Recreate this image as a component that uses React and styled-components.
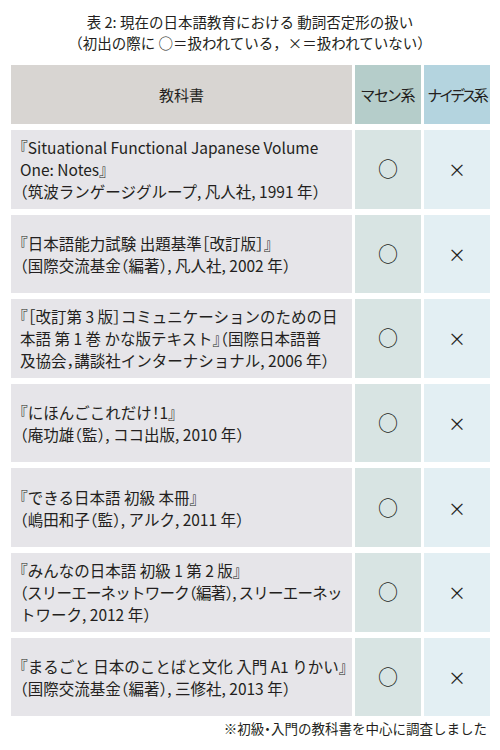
import React from 'react';
import styled, { createGlobalStyle } from 'styled-components';

const GlobalStyle = createGlobalStyle`
  body {
    margin: 0;
    background: #ffffff;
    color: #231f20;
    font-family: "Noto Sans CJK JP", "Noto Sans", sans-serif;
  }
`;

const Page = styled.div`
  width: 500px;
  box-sizing: border-box;
  padding: 11px 11px 0;
`;

const Caption = styled.div`
  text-align: center;
  font-size: 14.5px;
  line-height: 21px;
  margin-bottom: 12px;
`;

const Table = styled.div`
  display: grid;
  grid-template-columns: 341px 66px 66px;
  grid-template-rows: 59px;
  grid-auto-rows: 78.6px;
  column-gap: 3px;
  row-gap: 6px;
`;

const headBg = {
  book: '#d8d5d2',
  masen: '#b5cdca',
  naides: '#b4d4df',
};

const bodyBg = {
  book: '#e6e5e9',
  masen: '#d8e4e3',
  naides: '#e3eff3',
};

const HeadCell = styled.div`
  display: flex;
  align-items: center;
  justify-content: center;
  background: ${p => headBg[p.kind]};
  font-size: 15px;
  white-space: nowrap;
  font-feature-settings: ${p => (p.spacing ? '"palt"' : 'normal')};
  letter-spacing: ${p => p.spacing || '0'};
`;

const BookCell = styled.div`
  display: flex;
  flex-direction: column;
  justify-content: center;
  background: ${bodyBg.book};
  padding: 0 4px 0 9px;
  font-size: 15.5px;
  line-height: 22px;
  font-feature-settings: "halt";
`;

const Line = styled.span`
  display: block;
  white-space: nowrap;
  letter-spacing: ${p => (p.tight ? '-0.05em' : '0')};
`;

const MarkCell = styled.div`
  display: flex;
  align-items: center;
  justify-content: center;
  background: ${p => bodyBg[p.kind]};
`;

const Mark = styled.span`
  font-size: ${p => (p.circle ? '20px' : '18px')};
  line-height: 1;
`;

const Footnote = styled.div`
  text-align: right;
  font-size: 13.5px;
  line-height: 21px;
  margin-top: 2px;
  padding-right: 2px;
  font-feature-settings: "halt";
`;

const books = [
  ['『Situational Functional Japanese Volume', 'One: Notes』', '（筑波ランゲージグループ, 凡人社, 1991 年）'],
  ['『日本語能力試験 出題基準［改訂版］』', '（国際交流基金（編著）, 凡人社, 2002 年）'],
  ['『［改訂第 3 版］コミュニケーションのための日', '本語 第 1 巻 かな版テキスト』（国際日本語普', '及協会，講談社インターナショナル, 2006 年）'],
  ['『にほんごこれだけ！1』', '（庵功雄（監）, ココ出版, 2010 年）'],
  ['『できる日本語 初級 本冊』', '（嶋田和子（監）, アルク, 2011 年）'],
  ['『みんなの日本語 初級 1 第 2 版』', '~（スリーエーネットワーク（編著）, スリーエーネッ', 'トワーク, 2012 年）'],
  ['『まるごと 日本のことばと文化 入門 A1 りかい』', '（国際交流基金（編著）, 三修社, 2013 年）'],
];

export default function App() {
  return (
    <Page>
      <GlobalStyle />
      <Caption>
        表 2: 現在の日本語教育における 動詞否定形の扱い
        <br />
        （初出の際に ○＝扱われている，×＝扱われていない）
      </Caption>
      <Table>
        <HeadCell kind="book">教科書</HeadCell>
        <HeadCell kind="masen" spacing="-0.04em">マセン系</HeadCell>
        <HeadCell kind="naides" spacing="-0.15em">ナイデス系</HeadCell>
        {books.map((lines, i) => (
          <React.Fragment key={i}>
            <BookCell>
              {lines.map((l, j) => {
                const tight = l.startsWith('~');
                return (
                  <Line key={j} tight={tight}>
                    {tight ? l.slice(1) : l}
                  </Line>
                );
              })}
            </BookCell>
            <MarkCell kind="masen">
              <Mark circle>○</Mark>
            </MarkCell>
            <MarkCell kind="naides">
              <Mark>×</Mark>
            </MarkCell>
          </React.Fragment>
        ))}
      </Table>
      <Footnote>※初級・入門の教科書を中心に調査しました</Footnote>
    </Page>
  );
}
